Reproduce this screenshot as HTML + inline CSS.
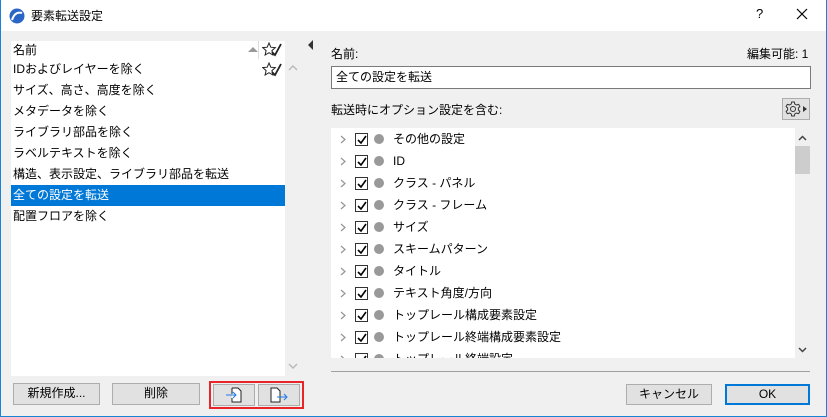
<!DOCTYPE html>
<html><head><meta charset="utf-8"><style>
*{box-sizing:border-box;margin:0;padding:0}
body{width:827px;height:417px;overflow:hidden;background:#f0f0f0;font-family:"Liberation Sans","Noto Sans CJK JP",sans-serif;font-size:12px;color:#000;position:relative}
.a{position:absolute}
.win{left:0;top:0;width:827px;height:417px;border:1px solid #1883d7;border-top:none}
.title{left:0;top:0;width:827px;height:31px;background:#fff}
.row{position:absolute;left:11px;width:274px;height:21px;line-height:21px;padding-left:2px;white-space:nowrap}
.btn{position:absolute;background:#e1e1e1;border:1px solid #adadad;text-align:center;line-height:19px}
.r{position:absolute;left:331px;height:22px;line-height:22px;white-space:nowrap}
.chev{position:absolute;left:9px;top:7px}
.cb{position:absolute;left:24px;top:5px;width:13px;height:13px;border:1px solid #333;background:#fff}
.cb svg{position:absolute;left:1px;top:1px}
.dot{position:absolute;left:43px;top:6px;width:10px;height:10px;border-radius:50%;background:#999}
.lt{position:absolute;left:62px;top:0}
</style></head><body>
<div class="a title"></div>
<div class="a win"></div>
<svg class="a" style="left:9px;top:8px" width="16" height="16"><circle cx="8" cy="8" r="7.5" fill="#2a66c8"/><path d="M3 12 Q6 3 13 5" stroke="#fff" stroke-width="2" fill="none"/></svg>
<div class="a" style="left:31px;top:7px;font-size:12px">要素転送設定</div>
<div class="a" style="left:756px;top:6px;font-size:13px">?</div>
<svg class="a" style="left:796px;top:8px" width="12" height="12"><path d="M1 1l10 10M11 1L1 11" stroke="#000" stroke-width="1.2"/></svg>

<!-- left list -->
<div class="a" style="left:11px;top:41px;width:274px;height:335px;background:#fff"></div>
<div class="a" style="left:285px;top:59px;width:15px;height:317px;background:#f0f0f0"></div>
<div class="row" style="top:40px">名前</div>
<div class="a" style="left:248px;top:47px;width:0;height:0;border-left:5px solid transparent;border-right:5px solid transparent;border-bottom:5px solid #999"></div>
<div class="a" style="left:258px;top:41px;width:1px;height:18px;background:#ddd"></div>
<svg class="a" style="left:262px;top:42px" width="20" height="16"><path d="M7 1l1.8 4.2 4.5.4-3.4 3 1 4.4L7 10.7 3.1 13l1-4.4-3.4-3 4.5-.4z" fill="none" stroke="#222"/><path d="M10 10l3 3 6-11" stroke="#222" stroke-width="1.8" fill="none"/></svg>
<svg class="a" style="left:262px;top:62px" width="20" height="16"><path d="M7 1l1.8 4.2 4.5.4-3.4 3 1 4.4L7 10.7 3.1 13l1-4.4-3.4-3 4.5-.4z" fill="none" stroke="#222"/><path d="M10 10l3 3 6-11" stroke="#222" stroke-width="1.8" fill="none"/></svg>
<svg class="a" style="left:288px;top:65px" width="10" height="6"><path d="M1 5l4-4 4 4" stroke="#bbb" stroke-width="1.5" fill="none"/></svg>
<svg class="a" style="left:288px;top:363px" width="10" height="6"><path d="M1 1l4 4 4-4" stroke="#bbb" stroke-width="1.5" fill="none"/></svg>
<div class="row" style="top:59px">IDおよびレイヤーを除く</div>
<div class="row" style="top:80px">サイズ、高さ、高度を除く</div>
<div class="row" style="top:101px">メタデータを除く</div>
<div class="row" style="top:122px">ライブラリ部品を除く</div>
<div class="row" style="top:143px">ラベルテキストを除く</div>
<div class="row" style="top:164px">構造、表示設定、ライブラリ部品を転送</div>
<div class="row" style="top:185px;background:#0078d7;color:#fff">全ての設定を転送</div>
<div class="row" style="top:206px">配置フロアを除く</div>
<div class="a" style="left:308px;top:40px;width:0;height:0;border-top:5px solid transparent;border-bottom:5px solid transparent;border-right:5px solid #333"></div>

<div class="btn" style="left:13px;top:383px;width:87px;height:22px">新規作成...</div>
<div class="btn" style="left:112px;top:383px;width:88px;height:22px">削除</div>
<div class="a" style="left:209px;top:381px;width:95px;height:28px;border:2px solid #e8262a"></div>
<div class="btn" style="left:213px;top:384px;width:42px;height:22px"><svg width="20" height="18" style="margin-top:1px"><path d="M8 2h6l3 3v11H8v-4M8 8V2" fill="#fff" stroke="#222"/><path d="M2 9h10M9 6l3 3-3 3" stroke="#1e7be0" fill="none"/></svg></div>
<div class="btn" style="left:258px;top:384px;width:42px;height:22px"><svg width="24" height="18" style="margin-top:1px"><path d="M4 2h6l3 3v11H4z" fill="#fff" stroke="#222"/><path d="M10 11h10M17 8l3 3-3 3" stroke="#1e7be0" fill="none"/></svg></div>

<!-- right -->
<div class="a" style="left:331px;top:45px">名前:</div>
<div class="a" style="left:747px;top:45px">編集可能: 1</div>
<div class="a" style="left:331px;top:66px;width:480px;height:23px;background:#fff;border:1px solid #7a7a7a;padding-left:4px;line-height:21px">全ての設定を転送</div>
<div class="a" style="left:331px;top:101px">転送時にオプション設定を含む:</div>
<div class="a" style="left:782px;top:98px;width:28px;height:22px;background:#e1e1e1;border:1px solid #adadad"></div>
<svg class="a" style="left:785px;top:101px" width="24" height="16"><g transform="translate(8,8)" fill="none" stroke="#333" stroke-width="1"><circle r="2.5"/><path d="M-1.3-7h2.6l.5 2 1.8 1 2-.7 1.3 2.2-1.5 1.5v2l1.5 1.5-1.3 2.2-2-.7-1.8 1-.5 2h-2.6l-.5-2-1.8-1-2 .7-1.3-2.2 1.5-1.5v-2l-1.5-1.5 1.3-2.2 2 .7 1.8-1z"/></g><path d="M18 5l4 3-4 3z" fill="#333"/></svg>
<div class="a" style="left:331px;top:128px;width:464px;height:230px;background:#fff"></div>
<div class="a" style="left:331px;top:128px;width:464px;height:230px;overflow:hidden">
<div class="r" style="left:0;top:0"><svg class="chev" width="6" height="9"><path d="M1 1l4 3.5L1 8" stroke="#999" stroke-width="1.3" fill="none"/></svg><span class="cb"><svg width="10" height="10"><path d="M1 5l3 3 5-7" stroke="#000" stroke-width="1.6" fill="none"/></svg></span><span class="dot"></span><span class="lt">その他の設定</span></div>
<div class="r" style="left:0;top:22px"><svg class="chev" width="6" height="9"><path d="M1 1l4 3.5L1 8" stroke="#999" stroke-width="1.3" fill="none"/></svg><span class="cb"><svg width="10" height="10"><path d="M1 5l3 3 5-7" stroke="#000" stroke-width="1.6" fill="none"/></svg></span><span class="dot"></span><span class="lt">ID</span></div>
<div class="r" style="left:0;top:44px"><svg class="chev" width="6" height="9"><path d="M1 1l4 3.5L1 8" stroke="#999" stroke-width="1.3" fill="none"/></svg><span class="cb"><svg width="10" height="10"><path d="M1 5l3 3 5-7" stroke="#000" stroke-width="1.6" fill="none"/></svg></span><span class="dot"></span><span class="lt">クラス - パネル</span></div>
<div class="r" style="left:0;top:66px"><svg class="chev" width="6" height="9"><path d="M1 1l4 3.5L1 8" stroke="#999" stroke-width="1.3" fill="none"/></svg><span class="cb"><svg width="10" height="10"><path d="M1 5l3 3 5-7" stroke="#000" stroke-width="1.6" fill="none"/></svg></span><span class="dot"></span><span class="lt">クラス - フレーム</span></div>
<div class="r" style="left:0;top:88px"><svg class="chev" width="6" height="9"><path d="M1 1l4 3.5L1 8" stroke="#999" stroke-width="1.3" fill="none"/></svg><span class="cb"><svg width="10" height="10"><path d="M1 5l3 3 5-7" stroke="#000" stroke-width="1.6" fill="none"/></svg></span><span class="dot"></span><span class="lt">サイズ</span></div>
<div class="r" style="left:0;top:110px"><svg class="chev" width="6" height="9"><path d="M1 1l4 3.5L1 8" stroke="#999" stroke-width="1.3" fill="none"/></svg><span class="cb"><svg width="10" height="10"><path d="M1 5l3 3 5-7" stroke="#000" stroke-width="1.6" fill="none"/></svg></span><span class="dot"></span><span class="lt">スキームパターン</span></div>
<div class="r" style="left:0;top:132px"><svg class="chev" width="6" height="9"><path d="M1 1l4 3.5L1 8" stroke="#999" stroke-width="1.3" fill="none"/></svg><span class="cb"><svg width="10" height="10"><path d="M1 5l3 3 5-7" stroke="#000" stroke-width="1.6" fill="none"/></svg></span><span class="dot"></span><span class="lt">タイトル</span></div>
<div class="r" style="left:0;top:154px"><svg class="chev" width="6" height="9"><path d="M1 1l4 3.5L1 8" stroke="#999" stroke-width="1.3" fill="none"/></svg><span class="cb"><svg width="10" height="10"><path d="M1 5l3 3 5-7" stroke="#000" stroke-width="1.6" fill="none"/></svg></span><span class="dot"></span><span class="lt">テキスト角度/方向</span></div>
<div class="r" style="left:0;top:176px"><svg class="chev" width="6" height="9"><path d="M1 1l4 3.5L1 8" stroke="#999" stroke-width="1.3" fill="none"/></svg><span class="cb"><svg width="10" height="10"><path d="M1 5l3 3 5-7" stroke="#000" stroke-width="1.6" fill="none"/></svg></span><span class="dot"></span><span class="lt">トップレール構成要素設定</span></div>
<div class="r" style="left:0;top:198px"><svg class="chev" width="6" height="9"><path d="M1 1l4 3.5L1 8" stroke="#999" stroke-width="1.3" fill="none"/></svg><span class="cb"><svg width="10" height="10"><path d="M1 5l3 3 5-7" stroke="#000" stroke-width="1.6" fill="none"/></svg></span><span class="dot"></span><span class="lt">トップレール終端構成要素設定</span></div>
<div class="r" style="left:0;top:220px"><svg class="chev" width="6" height="9"><path d="M1 1l4 3.5L1 8" stroke="#999" stroke-width="1.3" fill="none"/></svg><span class="cb"><svg width="10" height="10"><path d="M1 5l3 3 5-7" stroke="#000" stroke-width="1.6" fill="none"/></svg></span><span class="dot"></span><span class="lt">トップレール終端設定</span></div>
</div>
<div class="a" style="left:795px;top:146px;width:15px;height:28px;background:#cdcdcd"></div>
<svg class="a" style="left:798px;top:135px" width="9" height="6"><path d="M1 5l3.5-3.5L8 5" stroke="#444" stroke-width="1.5" fill="none"/></svg>
<svg class="a" style="left:798px;top:347px" width="9" height="6"><path d="M1 1l3.5 3.5L8 1" stroke="#444" stroke-width="1.5" fill="none"/></svg>
<div class="a" style="left:331px;top:371px;width:479px;height:1px;background:#a0a0a0"></div>
<div class="btn" style="left:626px;top:384px;width:86px;height:21px">キャンセル</div>
<div class="btn" style="left:725px;top:384px;width:85px;height:21px;border:2px solid #0078d7;line-height:17px">OK</div>
</body></html>
